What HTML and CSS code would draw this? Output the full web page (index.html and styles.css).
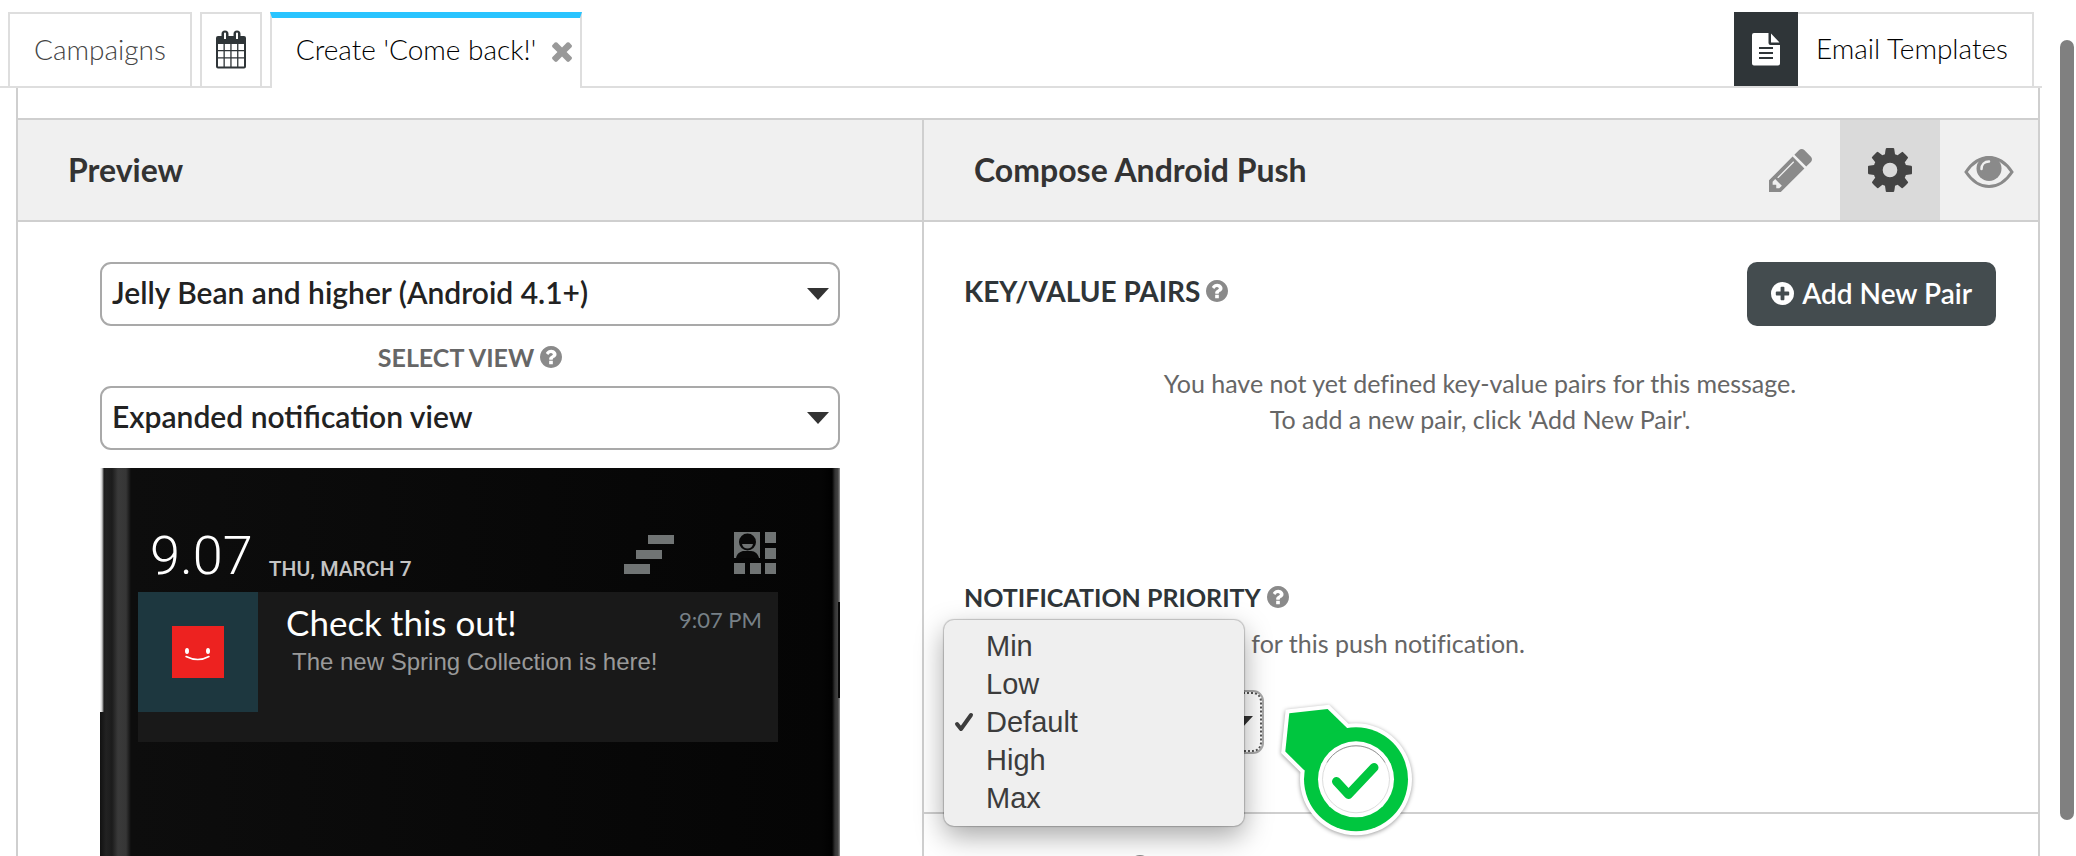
FILE: index.html
```
<!DOCTYPE html>
<html lang="en">
<head>
<meta charset="utf-8">
<title>Create 'Come back!'</title>
<link rel="stylesheet" href="styles.css">
</head>
<body>
<svg class="sprite" aria-hidden="true">
  <symbol id="help" viewBox="128 128 1536 1536"><path d="M1024 1376v-192q0-14-9-23t-23-9h-192q-14 0-23 9t-9 23v192q0 14 9 23t23 9h192q14 0 23-9t9-23zm256-672q0-88-55.5-163t-138.5-116-170-41q-243 0-371 213-15 24 8 42l132 100q7 6 19 6 16 0 25-12 53-68 86-92 34-24 86-24 48 0 85.5 26t37.5 59q0 38-20 61t-68 45q-63 28-115.5 86.5t-52.5 125.5v36q0 14 9 23t23 9h192q14 0 23-9t9-23q0-19 21.5-49.5t54.5-49.5q32-18 49-28.5t46-35 44.5-48 28-60.5 12.5-81zm384 192q0 209-103 385.5t-279.5 279.5-385.5 103-385.5-103-279.5-279.5-103-385.5 103-385.5 279.5-279.5 385.5-103 385.5 103 279.5 279.5 103 385.5z"/></symbol>
</svg>
<div class="page">
  <nav class="tabs">
    <a class="tab tab-muted" href="#campaigns">Campaigns</a>
    <a class="tab tab-icon" href="#calendar" aria-label="Calendar">
      <svg width="30" height="40" viewBox="0 0 30 40"><path fill="#2f3538" fill-rule="evenodd" d="M2 6h3.500V4a3.500 3.500 0 0 1 7 0v2h5V4a3.500 3.500 0 0 1 7 0v2H28a2 2 0 0 1 2 2v28.500a2 2 0 0 1-2 2H2a2 2 0 0 1-2-2V8a2 2 0 0 1 2-2zM8 3.500v5.500h2V3.500a1 1 0 0 0-2 0zM20 3.500v5.500h2V3.500a1 1 0 0 0-2 0zM2 14v6h5.500v-6zM8.800 14v6h5.500v-6zM15.600 14v6h5.500v-6zM22.400 14v6H28v-6zM2 21.300v6h5.500v-6zM8.800 21.300v6h5.500v-6zM15.600 21.300v6h5.500v-6zM22.400 21.300v6H28v-6zM2 28.600v7.900h5.500v-7.900zM8.800 28.600v7.900h5.500v-7.900zM15.600 28.600v7.900h5.500v-7.900zM22.400 28.600v7.900H28v-7.900z"/></svg>
    </a>
    <div class="tab tab-active">
      <a class="tab-link" href="#create">Create 'Come back!'</a>
      <button class="close" aria-label="Close tab"><svg width="20" height="22" viewBox="300 238 1190 1316" preserveAspectRatio="none"><path fill="#999" d="M1490 1322q0 40-28 68l-136 136q-28 28-68 28t-68-28l-294-294-294 294q-28 28-68 28t-68-28l-136-136q-28-28-28-68t28-68l294-294-294-294q-28-28-28-68t28-68l136-136q28-28 68-28t68 28l294 294 294-294q28-28 68-28t68 28l136 136q28 28 28 68t-28 68l-294 294 294 294q28 28 28 68z"/></svg></button>
    </div>
    <a class="templates" href="#templates">
      <span class="templates-icon"><svg width="28" height="33" viewBox="0 0 28 33"><path fill="#fff" d="M2 0h14.500v10a2 2 0 0 0 2 2H28v18.500a2 2 0 0 1-2 2H2a2 2 0 0 1-2-2V2a2 2 0 0 1 2-2zM19 .5l8.500 9H19z"/><path stroke="#2f3538" stroke-width="2" d="M7 15h14M7 20h14M7 25h14"/></svg></span>
      <span class="templates-text">Email Templates</span>
    </a>
  </nav>

  <main class="panel">
    <section class="col preview">
      <header class="head"><h2>Preview</h2></header>
      <div class="preview-body">
        <select class="select" aria-label="Android version"><option>Jelly Bean and higher (Android 4.1+)</option></select>
        <label class="view-label" for="view">SELECT VIEW <svg class="help" aria-hidden="true"><use href="#help"/></svg></label>
        <select class="select" id="view"><option>Expanded notification view</option></select>
        <div class="phone">
          <div class="status">
            <span class="clock">9.07</span>
            <span class="date">THU, MARCH 7</span>
            <svg class="status-icons" width="154" height="44" viewBox="0 0 154 44"><g fill="#707474"><path d="M25 3h26v9H25zM13 18h26v9H13zM1 32h26v10H1zM111 0h26v26h-26zM142 0h11v11h-11zM142 16h11v11h-11zM111 31h11v11h-11zM127 31h11v11h-11zM142 31h11v11h-11z"/></g><circle cx="124.500" cy="10" r="8.500" fill="#080808"/><path fill="#080808" d="M113 26c1-5 5-7 8-7h7c4 0 7 3 8 7z"/><path fill="#707474" d="M119 12h11c-1 6-10 6-11 0z"/></svg>
          </div>
          <div class="note">
            <div class="note-icon"><svg width="52" height="52" viewBox="0 0 52 52"><path fill="#ed2220" d="M0 0h52v52H0z"/><ellipse cx="15" cy="25" rx="2" ry="3" fill="#fff"/><ellipse cx="36" cy="25" rx="2" ry="3" fill="#fff"/><path fill="none" stroke="#fff" stroke-width="1.500" stroke-linecap="round" d="M14 30.500q12 6 23 0"/></svg></div>
            <div class="note-text">
              <div class="note-line"><span class="note-title">Check this out!</span><span class="note-time">9:07 PM</span></div>
              <p class="note-body">The new Spring Collection is here!</p>
            </div>
          </div>
        </div>
      </div>
    </section>

    <section class="col">
      <header class="head">
        <h2>Compose Android Push</h2>
        <div class="modes">
          <button class="mode" aria-label="Edit"><svg width="43" height="43" viewBox="128 148 1516 1516"><path fill="#8a8a8a" d="M491 1536l91-91-235-235-91 91v107h128v128h107zm523-928q0-22-22-22-10 0-17 7l-542 542q-7 7-7 17 0 22 22 22 10 0 17-7l542-542q7-7 7-17zm-54-192l416 416-832 832h-416v-416zm683 96q0 53-37 90l-166 166-416-416 166-165q36-38 90-38 53 0 91 38l235 234q37 39 37 91z"/></svg></button>
          <button class="mode mode-on" aria-label="Settings"><svg width="44" height="44" viewBox="128 128 1536 1536"><path fill="#444" d="M1152 896q0-106-75-181t-181-75-181 75-75 181 75 181 181 75 181-75 75-181zm512-109v222q0 12-8 23t-20 13l-185 28q-19 54-39 91 35 50 107 138 10 12 10 25t-9 23q-27 37-99 108t-94 71q-12 0-26-9l-138-108q-44 23-91 38-16 136-29 186-7 28-36 28h-222q-14 0-24.500-8.500t-11.500-21.500l-28-184q-49-16-90-37l-141 107q-10 9-25 9-14 0-25-11-126-114-165-168-7-10-7-23 0-12 8-23 15-21 51-66.500t54-70.500q-27-50-41-99l-183-27q-13-2-21-12.500t-8-23.500v-222q0-12 8-23t19-13l186-28q14-46 39-92-40-57-107-138-10-12-10-24 0-10 9-23 26-36 98.500-107.500t94.500-71.500q13 0 26 10l138 107q44-23 91-38 16-136 29-186 7-28 36-28h222q14 0 24.500 8.500t11.500 21.500l28 184q49 16 90 37l142-107q9-9 24-9 13 0 25 10 129 119 165 170 7 8 7 22 0 12-8 23-15 21-51 66.500t-54 70.500q26 50 41 98l183 28q13 2 21 12.500t8 23.500z"/></svg></button>
          <button class="mode mode-last" aria-label="View"><svg width="50" height="34" viewBox="0 0 50 34"><path fill="none" stroke="#8a8a8a" stroke-width="3" d="M2 17C8 8 16 2.500 25 2.500S42 8 48 17C42 26 34 31.500 25 31.500S8 26 2 17z"/><circle cx="25" cy="13.500" r="12.500" fill="#8a8a8a"/><path fill="none" stroke="#f0f0f0" stroke-width="2.500" stroke-linecap="round" d="M17.500 14c0-4.500 3-7.500 7.500-7.500"/></svg></button>
        </div>
      </header>

      <div class="section pairs">
        <div class="pairs-top">
          <h3 class="major">KEY/VALUE PAIRS <svg class="help" aria-hidden="true"><use href="#help"/></svg></h3>
          <button class="add"><svg width="23" height="23" viewBox="128 128 1536 1536"><path fill="#fff" d="M1344 960v-128q0-26-19-45t-45-19h-256v-256q0-26-19-45t-45-19h-128q-26 0-45 19t-19 45v256h-256q-26 0-45 19t-19 45v128q0 26 19 45t45 19h256v256q0 26 19 45t45 19h128q26 0 45-19t19-45v-256h256q26 0 45-19t19-45zm320-64q0 209-103 385.500t-279.500 279.500-385.500 103-385.500-103-279.500-279.500-103-385.500 103-385.500 279.500-279.500 385.500-103 385.500 103 279.500 279.500 103 385.500z"/></svg>Add New Pair</button>
        </div>
        <p class="empty">You have not yet defined key-value pairs for this message.<br>To add a new pair, click 'Add New Pair'.</p>
      </div>

      <div class="section priority">
        <h3><label for="priority">NOTIFICATION PRIORITY</label> <svg class="help" aria-hidden="true"><use href="#help"/></svg></h3>
        <p class="hint">Choose your priority level for this push notification.</p>
        <div class="picker">
          <select class="select select-focus" id="priority"><option>Default</option></select>
          <ul class="menu" role="listbox" aria-label="Priority">
            <li role="option">Min</li>
            <li role="option">Low</li>
            <li role="option" aria-selected="true"><svg class="tick" width="20" height="20" viewBox="0 0 20 20"><path fill="none" stroke="#3c3c3c" stroke-width="4" stroke-linecap="round" stroke-linejoin="round" d="M3 12l4 5L17 3"/></svg>Default</li>
            <li role="option">High</li>
            <li role="option">Max</li>
          </ul>
          <svg class="badge" width="148" height="148" viewBox="0 0 148 148">
            <g class="badge-shape" stroke-linejoin="miter">
              <path fill="#fff" stroke="#fff" stroke-width="8" d="M12.300 16.300L50.600 12l20 19.500L27.500 73.500L8.300 54.600z"/>
              <circle cx="79" cy="82.300" r="56" fill="#fff"/>
            </g>
            <path fill="#00c63f" d="M12.300 16.300L50.600 12l20 19.500L27.500 73.500L8.300 54.600z"/>
            <circle cx="79" cy="82.300" r="52" fill="#00c63f"/>
            <circle cx="79" cy="82.300" r="38" fill="#fff"/>
            <circle cx="79" cy="82.300" r="33.500" fill="none" stroke="#ddd" stroke-width="1"/>
            <path fill="none" stroke="#999" stroke-width="1" d="M50 65.500a33.500 33.500 0 0 1 58 0"/>
            <path fill="none" stroke="#00c63f" stroke-width="9" stroke-linecap="round" stroke-linejoin="round" d="M59.500 84.500L71.500 97.500L97 70.500"/>
          </svg>
        </div>
      </div>

      <div class="section next"><svg class="help" aria-hidden="true"><use href="#help"/></svg></div>
    </section>
  </main>
  <div class="scrollbar"></div>
</div>
</body>
</html>
```
FILE: styles.css
```
* { box-sizing: border-box; }
html, body { height: 100%; }
body {
  margin: 0;
  overflow: hidden;
  background: #fff;
  color: #222;
  font-family: Lato, "Open Sans", sans-serif;
  font-size: 25px;
  font-variant-ligatures: none;
}
h2, h3, p, ul { margin: 0; padding: 0; }
button { font: inherit; border: 0; padding: 0; background: none; cursor: pointer; }
a { color: inherit; text-decoration: none; }
svg { display: block; flex: none; }
.sprite { position: absolute; width: 0; height: 0; }
.page {
  position: relative;
  display: flex;
  flex-direction: column;
  height: 100vh;
  padding-right: 34px;
  overflow: hidden;
}

/* Tabs */
.tabs {
  flex: none;
  display: flex;
  gap: 8px;
  height: 88px;
  padding: 12px 8px 0;
  border-bottom: 2px solid #dedede;
}
.tab {
  display: flex;
  align-items: center;
  padding: 0 24px 2px;
  border: 2px solid #dedede;
  border-bottom: 0;
  font-size: 28px;
  font-weight: 300;
}
.tab-muted { color: #444; }
.tab-icon { padding: 0 14px; }
.tab-active {
  gap: 16px;
  margin-bottom: -2px;
  padding: 0 8px 8px 24px;
  border-top: 6px solid #29c4ff;
  background: #fff;
  color: #000;
}
.close { padding-top: 4px; }
.templates {
  display: flex;
  margin-left: auto;
  color: #000;
  font-size: 28px;
  font-weight: 300;
}
.templates-icon {
  display: flex;
  align-items: center;
  justify-content: center;
  width: 64px;
  background: #2f3538;
}
.templates-text {
  display: flex;
  align-items: center;
  padding: 0 24px 4px 18px;
  border: 2px solid #dedede;
  border-width: 2px 2px 0 0;
}

/* Columns */
.panel {
  flex: 1;
  display: grid;
  grid-template-columns: 906fr 1114fr;
  min-height: 0;
  margin: 0 2px 0 16px;
  padding-top: 30px;
  border: solid #cfcfcf;
  border-width: 0 2px;
}
.col { min-width: 0; }
.preview { border-right: 2px solid #cfcfcf; }
.head {
  display: flex;
  align-items: center;
  justify-content: space-between;
  height: 104px;
  padding-left: 50px;
  border: solid #cfcfcf;
  border-width: 2px 0;
  background: #f0f0f0;
}
h2 { padding-bottom: 2px; font-size: 32px; font-weight: 700; color: #333; }
h3 {
  display: flex;
  align-items: center;
  gap: 6px;
  font-size: 25px;
  line-height: 30px;
  color: #2f3538;
}
.modes { display: flex; align-self: stretch; }
.mode {
  display: flex;
  align-items: center;
  justify-content: center;
  width: 100px;
}
.mode-on { background: #dadada; }
.mode-last { width: 98px; padding-top: 4px; }
.help { width: 22px; height: 22px; fill: #8a8a8a; }

/* Preview */
.preview-body { display: flex; flex-direction: column; padding: 40px 82px 0; }
.select {
  appearance: none;
  height: 64px;
  padding: 0 40px 4px 10px;
  border: 2px solid #a9a9a9;
  border-radius: 11px;
  background: #fff url("data:image/svg+xml,%3Csvg xmlns='http://www.w3.org/2000/svg' viewBox='0 0 22 12'%3E%3Cpath fill='%23333' d='M0 0h22L11 12z'/%3E%3C/svg%3E") no-repeat right 9px center / 22px 12px;
  color: #222;
  font-family: inherit;
  font-size: 30px;
  font-weight: 600;
}
.view-label {
  display: flex;
  align-items: center;
  justify-content: center;
  gap: 6px;
  height: 60px;
  padding-top: 2px;
  color: #666;
  font-weight: 700;
}
.phone {
  height: 480px;
  margin-top: 18px;
  padding: 58px 62px 0 38px;
  background:
    linear-gradient(90deg, #fff, #ccc 2px, #222) no-repeat 0 0 / 4px 244px,
    linear-gradient(#080808, #080808) no-repeat 100% 134px / 2px 96px,
    linear-gradient(90deg, #111 0, #222 6px, #1c1c1c 12px, #3a3a3a 18px, #363636 26px, #0d0d0d 31px, #080808 60%, #050505 722px, #010101 732px, #333 735px, #444 738px, #999 100%);
}
.status {
  display: flex;
  align-items: flex-end;
  height: 66px;
  padding: 0 1px 8px 12px;
  color: #fff;
  font-family: Roboto, sans-serif;
}
.clock { font-size: 54px; font-weight: 300; line-height: 56px; }
.date { margin-left: 16px; color: #c4c4c4; font-size: 21px; font-weight: 500; line-height: 30px; }
.status-icons { margin: 0 0 8px auto; }
.note { display: flex; height: 150px; background: #191919; }
.note-icon {
  display: flex;
  align-items: center;
  justify-content: center;
  width: 120px;
  height: 120px;
  background: #1d373f;
}
.note-text { flex: 1; padding: 9px 16px 0 28px; }
.note-line { display: flex; justify-content: space-between; }
.note-title { color: #fff; font-size: 35px; line-height: 42px; }
.note-time { color: #778087; font-size: 22px; line-height: 38px; }
.note-body {
  padding: 1px 0 0 6px;
  color: #999;
  font-family: "Liberation Sans", sans-serif;
  font-size: 24px;
  line-height: 36px;
}

/* Compose */
.section { padding-left: 40px; }
.pairs { height: 358px; padding-top: 40px; padding-right: 42px; }
.pairs-top { display: flex; justify-content: space-between; }
.major { height: 58px; font-size: 28px; }
.add {
  display: flex;
  align-items: center;
  gap: 8px;
  height: 64px;
  padding: 0 24px 2px;
  border-radius: 10px;
  background: #444c4f;
  color: #fff;
  font-size: 28px;
  font-weight: 600;
}
.empty { padding-top: 39px; color: #666; line-height: 36px; text-align: center; }
.priority { height: 234px; padding-top: 2px; border-bottom: 2px solid #cfcfcf; }
.hint { padding-top: 13px; color: #666; line-height: 36px; }
.picker { position: relative; width: 300px; margin-top: 29px; }
.select-focus { width: 100%; outline: 2px dotted #555; outline-offset: -4px; }
.menu {
  position: absolute;
  top: -70px;
  left: -20px;
  width: 300px;
  padding: 7px 0 9px;
  border-radius: 10px;
  background: #efefef;
  box-shadow: 0 0 1px 1px rgba(0, 0, 0, .2), 0 10px 28px rgba(0, 0, 0, .35);
  color: #3c3c3c;
  font-family: "Liberation Sans", sans-serif;
  font-size: 29px;
  line-height: 38px;
  list-style: none;
}
.menu li { position: relative; padding-left: 42px; }
.tick { position: absolute; top: 9px; left: 10px; }
.badge { position: absolute; top: 7px; left: 313px; }
.badge-shape { filter: drop-shadow(0 1px 2px rgba(0, 0, 0, .4)); }
.next { padding: 41px 0 0 205px; }

.scrollbar {
  position: absolute;
  top: 40px;
  right: 2px;
  bottom: 36px;
  width: 14px;
  border-radius: 7px;
  background: #808080;
}
```
